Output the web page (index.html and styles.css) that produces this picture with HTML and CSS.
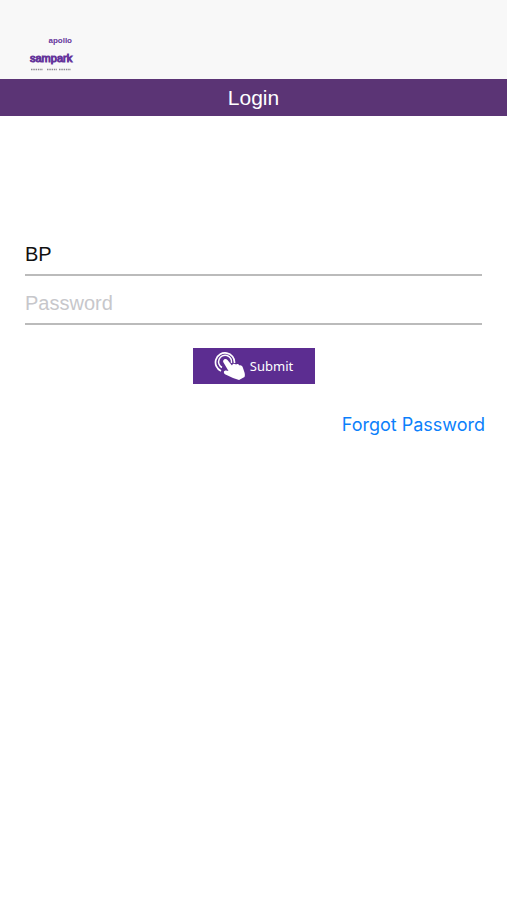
FILE: index.html
```html
<!DOCTYPE html>
<html lang="en">
<head>
  <meta charset="UTF-8">
  <meta name="viewport" content="width=device-width, initial-scale=1.0">
  <title>Login</title>
  <link rel="stylesheet" href="styles.css">
</head>
<body>
  <header class="header">
    <div class="logo">
      <span class="logo-top">apollo</span>
      <span class="logo-name">sampark</span>
      <svg class="logo-line" width="42" height="3" viewBox="0 0 42 3" aria-hidden="true">
        <path d="M1 1.5H13M17 1.5H27M29 1.5H41" stroke="#8d8990" stroke-width="1.5" stroke-dasharray="1.5 0.8"/>
      </svg>
    </div>
  </header>
  <h1 class="title">Login</h1>
  <main>
    <form class="login">
      <input class="field" type="text" value="BP" aria-label="User name">
      <input class="field" type="password" placeholder="Password" aria-label="Password">
      <button class="submit" type="submit">
        <svg width="32" height="30" viewBox="0 0 32 30" fill="none" aria-hidden="true">
          <g stroke="#fff">
            <path d="M7 20A9.500 9.500 0 1 1 20.500 12" stroke-width="1.7"/>
            <path d="M8 16.500A6.500 6.500 0 1 1 17.500 12" stroke-width="1.5"/>
          </g>
          <path fill="#fff" d="M9.500 11.500C8 9 11.500 6.500 13.500 9L18 14.500C18.500 12.500 20.500 12 22 13.500C23 12.500 25 13 25.500 14.500C27 14 28.500 15 29 17L30.500 21.500C31 23.500 31 24.500 30.500 26L25 29L19 27L11.500 23.500C9 22 9.500 19.500 12 19.500L14.500 20Z"/>
        </svg>
        <span>Submit</span>
      </button>
    </form>
    <a class="forgot" href="#">Forgot Password</a>
  </main>
</body>
</html>
```
FILE: styles.css
```css
* { margin: 0; padding: 0; box-sizing: border-box; }
body {
  min-height: 100vh;
  background: #fff;
  font-family: "Liberation Sans", Arial, sans-serif;
}
.header {
  display: flex;
  padding: 34px 30px 8px;
  background: #f8f8f8;
}
.logo {
  display: flex;
  flex-direction: column;
  width: 42px;
  color: #65359b;
}
.logo-top {
  font-size: 8px;
  font-weight: bold;
  line-height: 14px;
  text-align: right;
}
.logo-name {
  font-size: 11px;
  line-height: 20px;
  -webkit-text-stroke: 1px #65359b;
}
.logo-line {
  display: block;
}
.title {
  background: #5b3475;
  color: #fff;
  font-size: 21px;
  font-weight: normal;
  line-height: 37px;
  text-align: center;
}
.login {
  display: flex;
  flex-direction: column;
  padding: 111px 25px 0;
}
.field {
  width: 100%;
  height: 49px;
  padding-top: 8px;
  border: 0;
  border-bottom: 2px solid #bbb;
  border-radius: 0;
  background: none;
  color: #111;
  font-family: inherit;
  font-size: 20px;
  outline: none;
}
.field::placeholder {
  color: #c7c7cb;
}
.submit {
  display: flex;
  align-items: center;
  justify-content: center;
  gap: 4px;
  align-self: center;
  width: 122px;
  height: 36px;
  margin-top: 23px;
  border: 0;
  background: #5c2d91;
  color: #fff;
  font-family: "Noto Sans", sans-serif;
  font-size: 13px;
  cursor: pointer;
}
.forgot {
  display: block;
  margin: 29px 22px 0;
  color: #0b7ffb;
  font-family: Inter, sans-serif;
  font-size: 18px;
  line-height: 24px;
  text-align: right;
  text-decoration: none;
}
```
